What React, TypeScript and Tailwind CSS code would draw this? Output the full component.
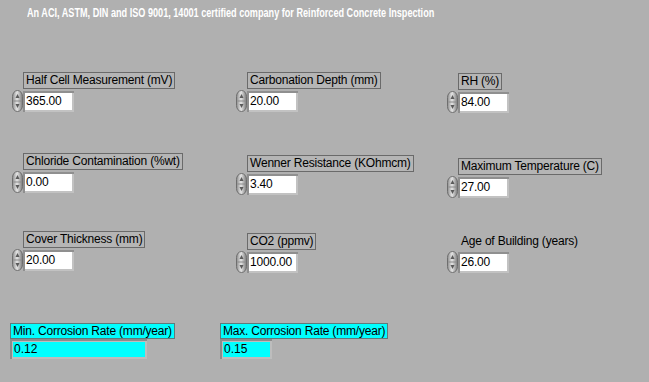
import React from "react";

const font = { fontFamily: '"Liberation Sans", Arial, sans-serif' };

function Spinner() {
  return (
    <svg width="11" height="22" viewBox="0 0 11 22" className="shrink-0">
      <defs>
        <linearGradient id="sg" x1="0" x2="1" y1="0" y2="0">
          <stop offset="0" stopColor="#8c8c8c" />
          <stop offset="0.45" stopColor="#e6e6e6" />
          <stop offset="1" stopColor="#7a7a7a" />
        </linearGradient>
      </defs>
      <rect x="0.5" y="0.5" width="10" height="21" rx="5" ry="6" fill="url(#sg)" stroke="#6e6e6e" strokeWidth="1" />
      <line x1="1.5" y1="11" x2="9.5" y2="11" stroke="#8a8a8a" strokeWidth="1" />
      <path d="M5.5 4 L7.5 8 L3.5 8 Z" fill="#5a5a5a" />
      <path d="M5.5 18 L7.5 14 L3.5 14 Z" fill="#5a5a5a" />
    </svg>
  );
}

function Field({ value, width = 47 }: { value: string; width?: number }) {
  return (
    <div className="bg-[#c2c2c2] border-t-2 border-l-2 border-[#8f8f8f] pr-[2px] pb-[2px]">
      <div
        className="bg-white h-[17px] text-[12px] leading-[17px] text-black pl-[1px] tracking-[-0.2px]"
        style={{ width }}
      >
        {value}
      </div>
    </div>
  );
}

function Control({
  label,
  value,
  boxed = true,
  className = "",
}: {
  label: string;
  value: string;
  boxed?: boolean;
  className?: string;
}) {
  return (
    <div className={"flex flex-col items-start " + className}>
      <div
        className={
          "ml-[11px] h-[17px] text-[12px] leading-[15px] text-black px-[2px] whitespace-nowrap tracking-[-0.2px] " +
          (boxed ? "border border-[#6a6a6a] bg-[#b5b5b5]" : "border border-transparent")
        }
      >
        {label}
      </div>
      <div className="flex items-center mt-[1px]">
        <Spinner />
        <Field value={value} />
      </div>
    </div>
  );
}

function Indicator({ label, value, width }: { label: string; value: string; width: number }) {
  return (
    <div className="flex flex-col items-start">
      <div className="h-[16px] bg-[#00ffff] border border-[#5e7a7a] px-[2px] text-[12px] leading-[14px] text-black whitespace-nowrap tracking-[-0.2px]">
        {label}
      </div>
      <div className="bg-[#bdbdbd] border-t-2 border-l-2 border-[#8c8c8c] pr-[2px] pb-[2px] pt-[1px] pl-[1px]">
        <div className="bg-[#00ffff] h-[15px] text-[12px] leading-[15px] text-black pl-[1px]" style={{ width }}>
          {value}
        </div>
      </div>
    </div>
  );
}

export default function App() {
  return (
    <div className="w-[649px] h-[382px] bg-[#b0b0b0] overflow-hidden" style={font}>
      <div className="pt-[6px] pl-[27px] h-[20px] text-white font-bold text-[12px] leading-[14px] whitespace-nowrap">
        <div className="inline-block origin-left scale-x-[0.76]">
          An ACI, ASTM, DIN and ISO 9001, 14001 certified company for Reinforced Concrete Inspection
        </div>
      </div>
      <div className="flex mt-[52px]">
        <div className="flex flex-col ml-[12px] w-[224px]">
          <Control label="Half Cell Measurement (mV)" value="365.00" />
          <Control className="mt-[41px]" label="Chloride Contamination (%wt)" value="0.00" />
          <Control className="mt-[38px]" label="Cover Thickness (mm)" value="20.00" />
        </div>
        <div className="flex flex-col w-[211px]">
          <Control label="Carbonation Depth (mm)" value="20.00" />
          <Control className="mt-[43px]" label="Wenner Resistance (KOhmcm)" value="3.40" />
          <Control className="mt-[38px]" label="CO2 (ppmv)" value="1000.00" />
        </div>
        <div className="flex flex-col">
          <Control className="mt-[1px]" label="RH (%)" value="84.00" />
          <Control className="mt-[45px]" label="Maximum Temperature (C)" value="27.00" />
          <Control className="mt-[35px]" label="Age of Building (years)" value="26.00" boxed={false} />
        </div>
      </div>
      <div className="flex mt-[50px] pl-[10px]">
        <div className="w-[210px]">
          <Indicator label="Min. Corrosion Rate (mm/year)" value="0.12" width={132} />
        </div>
        <Indicator label="Max. Corrosion Rate (mm/year)" value="0.15" width={47} />
      </div>
    </div>
  );
}
